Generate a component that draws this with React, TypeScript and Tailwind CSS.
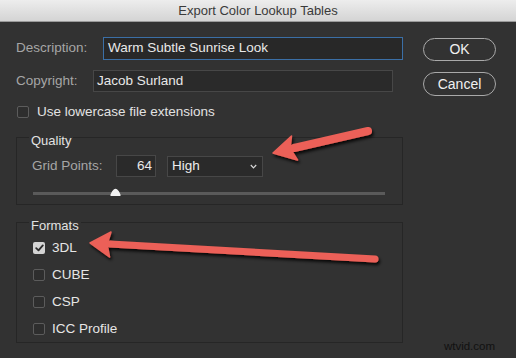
import { ReactNode } from 'react'

const FONT = "font-['Liberation_Sans',Arial,sans-serif]"

function Check({ on }: { on?: boolean }) {
  return on ? (
    <span className="flex h-[12px] w-[12px] items-center justify-center rounded-[2px] bg-[#d4d4d4]">
      <svg width="9" height="8" viewBox="0 0 9 8">
        <path d="M1.2 4.2 L3.5 6.4 L7.8 1.4" fill="none" stroke="#2c2c2c" strokeWidth="1.8" strokeLinecap="round" strokeLinejoin="round" />
      </svg>
    </span>
  ) : (
    <span className="block h-[12px] w-[12px] rounded-[2px] border border-[#5c5c5c] bg-[#2e2e2e]" />
  )
}

function Group({ title, className, children }: { title: string; className: string; children: ReactNode }) {
  return (
    <div className={`relative border border-[#262626] ${className}`}>
      <span className="absolute -top-[5px] left-[12px] bg-[#323232] px-[2px] text-[13px] leading-[15px] text-[#e2e2e2]">{title}</span>
      {children}
    </div>
  )
}

function Arrows() {
  return (
    <svg className="pointer-events-none absolute left-0 top-0" width="516" height="358" viewBox="0 0 516 358">
      <defs>
        <filter id="sh" x="-20%" y="-50%" width="140%" height="200%">
          <feDropShadow dx="1.5" dy="2.5" stdDeviation="1.6" floodColor="#000" floodOpacity="0.85" />
        </filter>
      </defs>
      <g filter="url(#sh)" fill="#ec6158" stroke="#ec6158" strokeLinecap="round" strokeLinejoin="round">
        <line x1="368" y1="131" x2="294" y2="148" strokeWidth="8" />
        <path d="M273 153 L291.5 136 L290 148.5 L297.5 160 Z" strokeWidth="1.5" />
        <line x1="375" y1="259" x2="110" y2="244" strokeWidth="7" />
        <path d="M90 243 L111 232 L107 244.2 L109.5 257 Z" strokeWidth="1.5" />
      </g>
    </svg>
  )
}

export default function App() {
  return (
    <div className={`relative h-[358px] w-[516px] overflow-hidden bg-[#323232] ${FONT}`}>
      <div className="flex h-[22px] items-center justify-center border-b border-[#9a9a9a] bg-gradient-to-b from-[#ededed] to-[#d4d4d4] text-[13px] text-[#3a3a3a]">
        Export Color Lookup Tables
      </div>

      <div className="flex pl-[16px] pt-[15px]">
        <div className="w-[387px]">
          <div className="flex h-[23px] items-center">
            <span className="w-[87px] text-[13.5px] text-[#a6a6a6]">Description:</span>
            <div className="flex h-[23px] w-[300px] items-center border border-[#3b6fa6] bg-[#282828] pl-[4px] text-[13.5px] text-[#e8e8e8]">
              Warm Subtle Sunrise Look
            </div>
          </div>
          <div className="mt-[10px] flex h-[22px] items-center">
            <span className="w-[77px] text-[13.5px] text-[#a6a6a6]">Copyright:</span>
            <div className="flex h-[22px] w-[300px] items-center border border-[#474747] bg-[#2a2a2a] pl-[3px] text-[13.5px] text-[#e8e8e8]">
              Jacob Surland
            </div>
          </div>
          <div className="mt-[14px] flex h-[12px] items-center pl-[1px]">
            <Check />
            <span className="ml-[8px] text-[13.5px] text-[#e2e2e2]">Use lowercase file extensions</span>
          </div>

          <Group title="Quality" className="mt-[19px] h-[68px]">
            <div className="flex items-center pl-[15px] pt-[17px]">
              <span className="w-[84px] text-[13.5px] text-[#a6a6a6]">Grid Points:</span>
              <div className="flex h-[22px] w-[40px] items-center justify-end border border-[#474747] bg-[#2a2a2a] pr-[3px] text-[13.5px] text-[#e8e8e8]">
                64
              </div>
              <div className="ml-[11px] flex h-[21px] w-[96px] items-center justify-between border border-[#474747] bg-[#2a2a2a] pl-[4px] pr-[5px] text-[13.5px] text-[#ededed]">
                High
                <svg width="7" height="5" viewBox="0 0 7 5">
                  <path d="M0.8 1 L3.5 3.8 L6.2 1" fill="none" stroke="#d8d8d8" strokeWidth="1.2" />
                </svg>
              </div>
            </div>
            <div className="relative ml-[16px] mt-[15px] h-[3px] w-[352px] bg-[#5a5a5a]">
              <svg className="absolute -top-[4px] left-[77px]" width="11" height="8" viewBox="0 0 11 8">
                <path d="M0.5 8 L0.5 6.5 Q2 2.5 4 1.2 Q5.5 0.2 7 1.2 Q9 2.5 10.5 6.5 L10.5 8 Z" fill="#f2f2f2" />
              </svg>
            </div>
          </Group>

          <Group title="Formats" className="mt-[17px] h-[121px]">
            <div className="flex flex-col gap-[15px] pl-[16px] pt-[19px]">
              {[
                { label: '3DL', on: true },
                { label: 'CUBE' },
                { label: 'CSP' },
                { label: 'ICC Profile' },
              ].map((f) => (
                <div key={f.label} className="flex h-[12px] items-center">
                  <Check on={f.on} />
                  <span className="ml-[7px] text-[13.5px] text-[#e6e6e6]">{f.label}</span>
                </div>
              ))}
            </div>
          </Group>
        </div>

        <div className="ml-[20px] flex w-[73px] flex-col">
          <button className="mt-[1px] h-[23px] rounded-full border border-[#a9a9a9] text-[14px] text-[#f0f0f0]">OK</button>
          <button className="mt-[11px] h-[24px] rounded-full border border-[#a9a9a9] text-[14px] text-[#f0f0f0]">Cancel</button>
        </div>
      </div>

      <Arrows />
      <span className="absolute bottom-[3px] right-[21px] text-[11.5px] text-[#111]">wtvid.com</span>
    </div>
  )
}
